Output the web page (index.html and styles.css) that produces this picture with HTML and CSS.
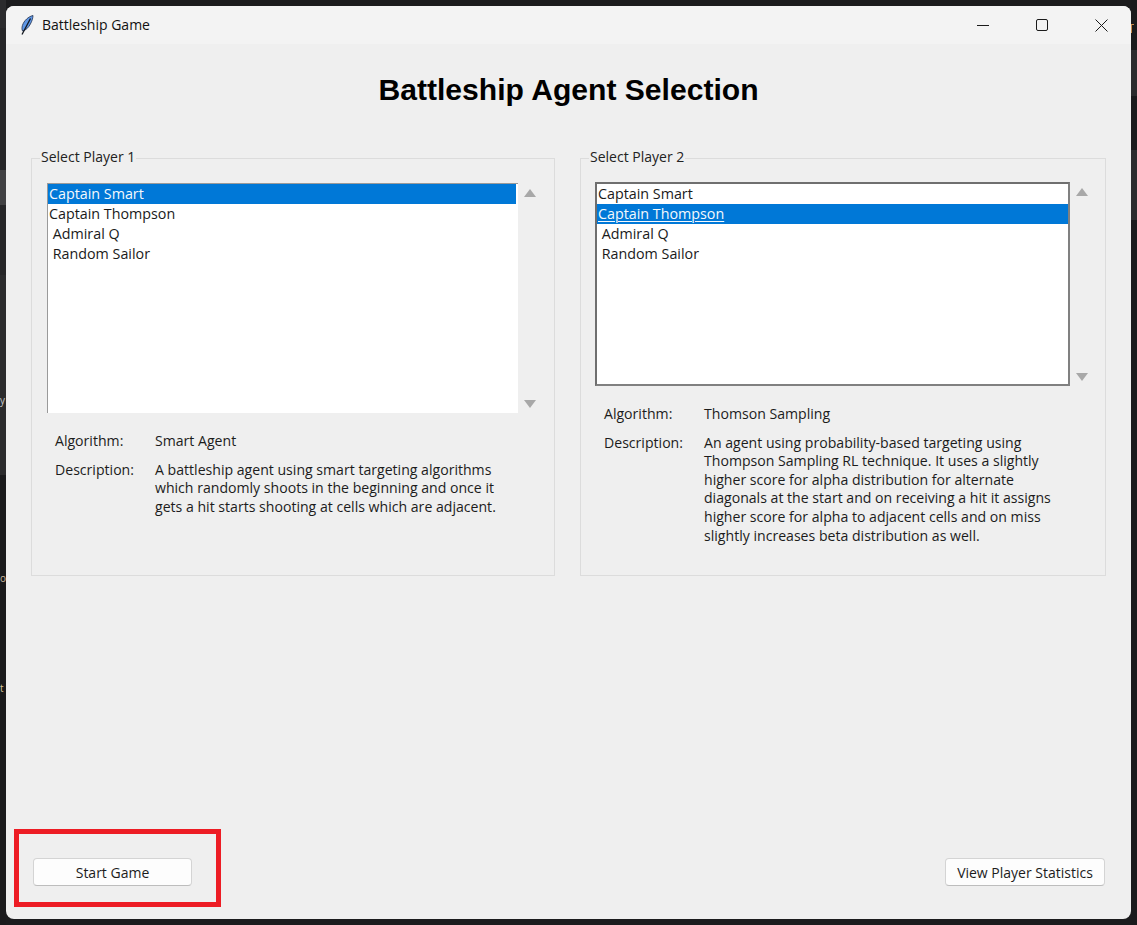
FILE: index.html
```html
<!DOCTYPE html>
<html lang="en">
<head>
<meta charset="utf-8">
<title>Battleship Game</title>
<link rel="stylesheet" href="styles.css">
</head>
<body>
<div class="backdrop backdrop-left" aria-hidden="true">
  <i class="seg s28 c-mid"></i>
  <i class="seg s142 c-dim"></i>
  <i class="seg s35 c-hi"></i>
  <i class="seg s70 c-dim"></i>
  <i class="seg s200 c-mid"></i>
  <i class="seg fill c-dark"></i>
  <span class="bd-char bd-y">y</span>
  <span class="bd-char bd-o">o</span>
  <span class="bd-char bd-t">t</span>
</div>
<div class="backdrop backdrop-right" aria-hidden="true">
  <i class="seg s50 c-dark"></i>
  <i class="seg s46 c-mid"></i>
  <i class="seg s54 c-dark"></i>
  <i class="seg s70 c-mid"></i>
  <i class="seg fill c-dark"></i>
  <b class="bd-mark"></b>
</div>
<div class="window">
  <header class="titlebar">
    <svg class="app-icon" width="16" height="20" viewBox="0 0 16 20">
      <path d="M14 0.5 C9.5 1.5 5 5.5 3.4 10.5 C2.7 13 2.9 14.8 3.6 16 C7 15.2 9.8 12.2 11.4 9 C13 6 13.9 3.5 14 0.5 Z" fill="#5f97e6" stroke="#22304d" stroke-width="0.8"/>
      <path d="M11.5 3.5 L3 19.5" stroke="#14181f" stroke-width="1.3" fill="none"/>
    </svg>
    <span class="window-title">Battleship Game</span>
    <div class="window-controls">
      <svg class="ctl" width="12" height="12" viewBox="0 0 12 12"><path d="M0 6.5 H12" stroke="#1a1a1a" stroke-width="1"/></svg>
      <svg class="ctl" width="12" height="12" viewBox="0 0 12 12"><rect x="0.5" y="0.5" width="11" height="11" rx="1.5" fill="none" stroke="#1a1a1a" stroke-width="1"/></svg>
      <svg class="ctl" width="13" height="13" viewBox="0 0 13 13"><path d="M0.5 0.5 L12.5 12.5 M12.5 0.5 L0.5 12.5" stroke="#1a1a1a" stroke-width="1"/></svg>
    </div>
  </header>
  <main class="content">
    <h1 class="heading">Battleship Agent Selection</h1>
    <div class="panels">
      <section class="panel panel-left">
        <span class="legend">Select Player 1</span>
        <div class="list-row">
          <ul class="listbox listbox-idle">
            <li class="item selected">Captain Smart</li>
            <li class="item">Captain Thompson</li>
            <li class="item"> Admiral Q</li>
            <li class="item"> Random Sailor</li>
          </ul>
          <div class="scroll">
            <span class="arrow-up"></span>
            <span class="arrow-down"></span>
          </div>
        </div>
        <dl class="info">
          <div class="info-row algo">
            <dt>Algorithm:</dt>
            <dd>Smart Agent</dd>
          </div>
          <div class="info-row">
            <dt>Description:</dt>
            <dd>A battleship agent using smart targeting algorithms<br>which randomly shoots in the beginning and once it<br>gets a hit starts shooting at cells which are adjacent.</dd>
          </div>
        </dl>
      </section>
      <section class="panel panel-right">
        <span class="legend">Select Player 2</span>
        <div class="list-row">
          <ul class="listbox listbox-focus">
            <li class="item">Captain Smart</li>
            <li class="item selected active">Captain Thompson</li>
            <li class="item"> Admiral Q</li>
            <li class="item"> Random Sailor</li>
          </ul>
          <div class="scroll">
            <span class="arrow-up"></span>
            <span class="arrow-down"></span>
          </div>
        </div>
        <dl class="info">
          <div class="info-row algo">
            <dt>Algorithm:</dt>
            <dd>Thomson Sampling</dd>
          </div>
          <div class="info-row">
            <dt>Description:</dt>
            <dd>An agent using probability-based targeting using<br>Thompson Sampling RL technique. It uses a slightly<br>higher score for alpha distribution for alternate<br>diagonals at the start and on receiving a hit it assigns<br>higher score for alpha to adjacent cells and on miss<br>slightly increases beta distribution as well.</dd>
          </div>
        </dl>
      </section>
    </div>
    <footer class="actions">
      <button class="btn btn-start" type="button">Start Game</button>
      <button class="btn btn-stats" type="button">View Player Statistics</button>
    </footer>
  </main>
  <div class="annotation" aria-hidden="true"></div>
</div>
</body>
</html>
```
FILE: styles.css
```css
* { box-sizing: border-box; }
html, body { margin: 0; height: 100%; }
body {
  background: #1b1b1d;
  padding: 6px;
  font-family: "Open Sans", "Noto Sans", sans-serif;
  font-size: 14px;
  color: #1c1c1c;
  overflow: hidden;
}
.backdrop {
  position: absolute;
  top: 0;
  bottom: 0;
  width: 6px;
  overflow: hidden;
  display: flex;
  flex-direction: column;
}
.backdrop-left { left: 0; }
.backdrop-right { right: 0; }
.seg { display: block; flex: none; }
.fill { flex: 1; }
.s28 { height: 28px; }
.s35 { height: 35px; }
.s46 { height: 46px; }
.s50 { height: 50px; }
.s54 { height: 54px; }
.s70 { height: 70px; }
.s142 { height: 142px; }
.s200 { height: 200px; }
.c-mid { background: #2b2b2d; }
.c-dim { background: #262628; }
.c-hi { background: #414143; }
.c-dark { background: #1a1a1c; }
.bd-char { position: absolute; left: 0; color: #c8c8c8; font-size: 10px; line-height: 14px; }
.bd-y { top: 393px; }
.bd-o { top: 571px; color: #c9b9a0; }
.bd-t { top: 681px; color: #d8c49a; }
.bd-mark {
  position: absolute;
  top: 24px;
  left: 0;
  width: 3px;
  height: 9px;
  border-top: 1px solid #c98a4a;
  border-left: 1px solid #c98a4a;
}
.window {
  position: relative;
  width: 1125px;
  height: 913px;
  background: #efefef;
  border-radius: 8px;
  overflow: hidden;
  display: flex;
  flex-direction: column;
}
.titlebar {
  height: 38px;
  flex: none;
  background: #f3f3f3;
  display: flex;
  align-items: center;
  padding-left: 13px;
}
.app-icon { flex: none; margin-right: 7px; }
.window-title { font-size: 14px; color: #111; margin-top: -1px; }
.window-controls {
  margin-left: auto;
  display: flex;
  align-items: center;
  gap: 47px;
  padding-right: 23px;
}
.ctl { display: block; }
.content {
  flex: 1;
  display: flex;
  flex-direction: column;
  padding: 0 25px 33px;
}
.heading {
  margin: 28px 0 0;
  height: 36px;
  font: bold 30.1px/36px "Liberation Sans", Arial, sans-serif;
  color: #000;
  text-align: center;
}
.panels {
  display: flex;
  gap: 25px;
  margin-top: 50px;
  height: 418px;
}
.panel {
  position: relative;
  border: 1px solid #dcdcdc;
  height: 100%;
}
.panel-left { width: 524px; padding: 24px 0 0 15px; }
.panel-right { width: 526px; padding: 23px 0 0 14px; }
.legend {
  position: absolute;
  top: -12px;
  left: 8px;
  padding: 0 1px;
  background: #efefef;
  line-height: 19px;
  font-size: 14px;
  color: #222;
}
.list-row { display: flex; }
.listbox {
  list-style: none;
  margin: 0;
  background: #fff;
  overflow: hidden;
  font-size: 14.3px;
}
.listbox-idle {
  width: 471px;
  height: 230px;
  padding: 0 2px 0 0;
  border-left: 1px solid #9a9a9a;
  border-top: 1px solid #9a9a9a;
}
.listbox-focus {
  width: 475px;
  height: 204px;
  padding: 0;
  border: 2px solid #6f6f6f;
  border-bottom-color: #808080;
  border-right-color: #808080;
}
.item {
  height: 20px;
  line-height: 20px;
  white-space: pre;
  padding-left: 1px;
  color: #1a1a1a;
}
.selected { background: #0078d7; color: #f4f8fc; }
.active { text-decoration: underline; text-underline-offset: 2px; text-decoration-thickness: 1px; }
.scroll {
  width: 23px;
  display: flex;
  flex-direction: column;
  justify-content: space-between;
  align-items: center;
  padding: 6px 0 5px;
}
.arrow-up, .arrow-down {
  width: 0;
  height: 0;
  border-left: 6px solid transparent;
  border-right: 6px solid transparent;
}
.arrow-up { border-bottom: 8px solid #a8a8a8; }
.arrow-down { border-top: 8px solid #a8a8a8; }
.info { margin: 0; padding-left: 8px; font-size: 14.1px; }
.panel-left .info { margin-top: 19px; }
.panel-right .info { margin-top: 19px; padding-left: 9px; }
.info-row { display: flex; line-height: 18.6px; }
.info-row dt { width: 100px; flex: none; }
.info-row dd { margin: 0; white-space: nowrap; }
.algo { margin-bottom: 10px; }
.actions {
  margin-top: auto;
  display: flex;
  justify-content: space-between;
  padding: 0 1px 0 2px;
}
.btn {
  height: 28px;
  background: #fdfdfd;
  border: 1px solid #d4d4d4;
  border-bottom-color: #bdbdbd;
  border-radius: 4px;
  font-family: inherit;
  font-size: 14px;
  color: #1c1c1c;
  padding: 0;
}
.btn-start { width: 159px; }
.btn-stats { width: 160px; }
.annotation {
  position: absolute;
  left: 8px;
  top: 823px;
  width: 207px;
  height: 78px;
  border: 5px solid #ed1c24;
}
```
